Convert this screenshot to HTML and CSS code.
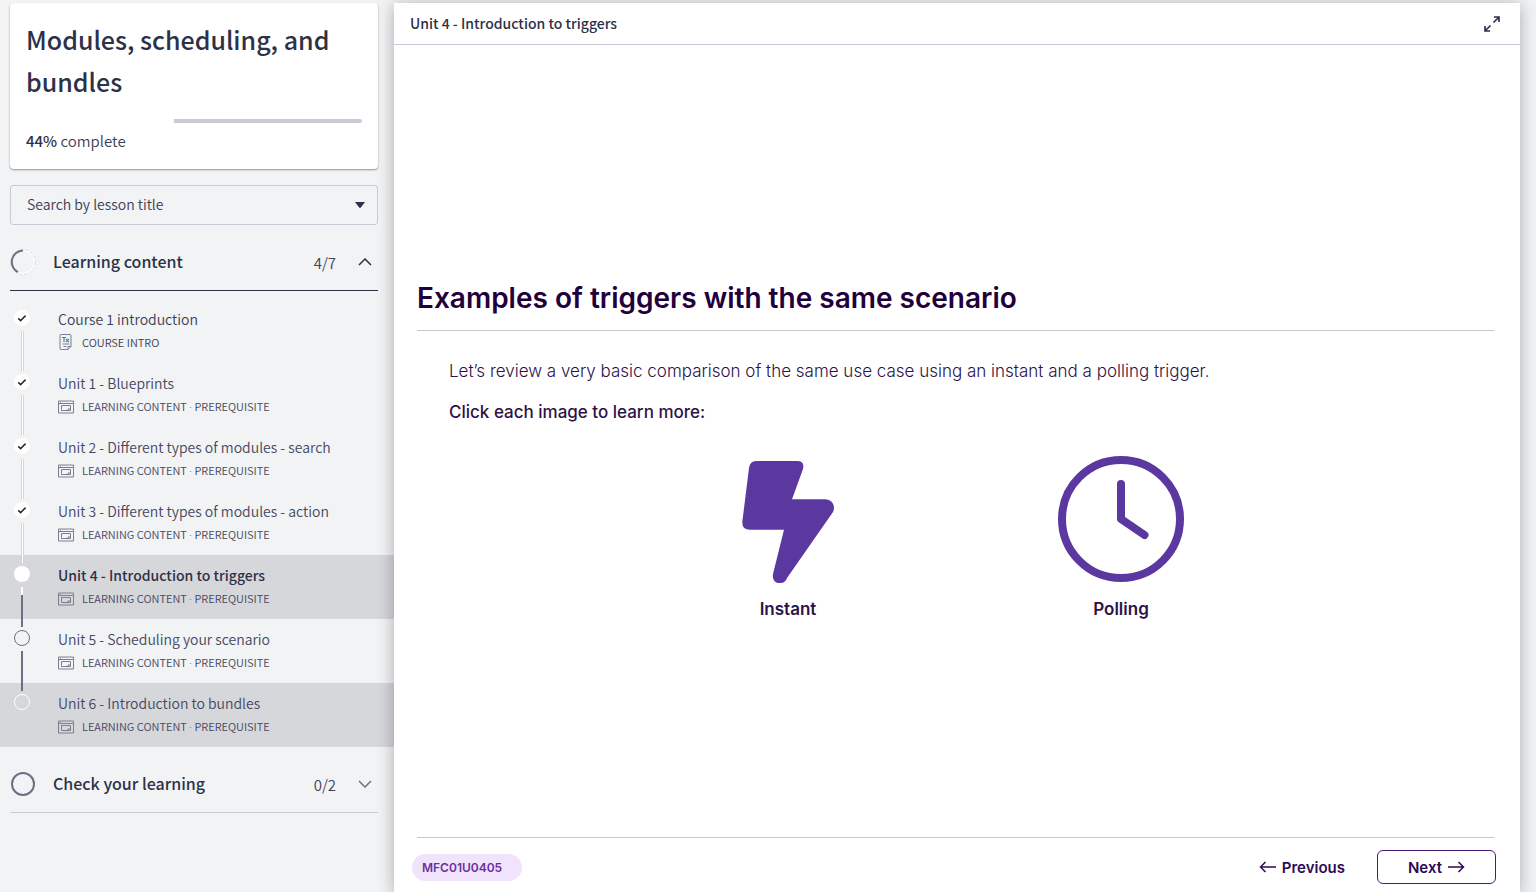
FILE: index.html
```html
<!DOCTYPE html>
<html lang="en">
<head>
<meta charset="utf-8">
<meta name="viewport" content="width=device-width, initial-scale=1">
<title>Modules, scheduling, and bundles</title>
<link rel="stylesheet" href="styles.css">
</head>
<body>
<svg class="sprite" aria-hidden="true">
  <symbol id="check" viewBox="0 0 16 16"><path d="M4.2 8.4l2.4 2.2 5-5" fill="none" stroke="currentColor" stroke-width="1.5"/></symbol>
  <symbol id="lesson" viewBox="0 0 16 14"><path d="M.5 1h15v12H.5zM.5 3.500h15M3.500 5.500h9v5h-9zM12.500 9H10v1.500M2 2.300h1" fill="none" stroke="currentColor"/></symbol>
  <symbol id="text-page" viewBox="0 0 16 16"><path d="M3.500.500h8q1 0 1 1V12.500l-3 3h-7q-1 0-1-1v-13q0-1 1-1zM12.500 12.500h-3v3M4 10h7M5 12.500h3" transform="translate(.5 0)" fill="none" stroke="currentColor"/><path d="M4 3.500h4M6 3.500V8M8 5l3 3M11 5L8 8" fill="none" stroke="#4f7fa8" stroke-width="1.200"/></symbol>
</svg>
<div class="shell">
  <aside class="sidebar">
    <section class="course-card">
      <h1 class="course-title">Modules, scheduling, and bundles</h1>
      <div class="progress" role="progressbar" aria-valuenow="44" aria-valuemin="0" aria-valuemax="100" aria-label="Course progress"><div class="progress-done" style="width:44%"></div><div class="progress-rest"></div></div>
      <p class="progress-text"><strong>44%</strong> complete</p>
    </section>
    <div class="search">
      <select class="search-select" aria-label="Search by lesson title"><option>Search by lesson title</option></select>
      <svg class="search-arrow" viewBox="0 0 10 6" aria-hidden="true"><path d="M0 0h10L5.800 5.500q-.8.8-1.600 0z" fill="#2d3148"/></svg>
    </div>
    <nav aria-label="Course outline">
      <button class="section-head open" aria-expanded="true">
        <svg class="ring" viewBox="0 0 26 26" aria-hidden="true"><circle cx="13" cy="13" r="11.500" fill="none" stroke="#fff" stroke-width="1.500"/><circle cx="13" cy="13" r="12.300" fill="none" stroke="#c9cad3" stroke-width=".6" stroke-dasharray="3 2"/><path d="M8 23.200A11.500 11.500 0 0 1 13 1.500" fill="none" stroke="#6d6f82" stroke-width="2"/></svg>
        <span class="section-name">Learning content</span><span class="section-count">4/7</span>
        <svg class="chevron" viewBox="0 0 14 8" aria-hidden="true"><path d="M1 7l6-6 6 6" fill="none" stroke="currentColor" stroke-width="1.500"/></svg>
      </button>
      <ol class="lessons">
        <li><a class="lesson intro" href="#l1"><span class="track"><i class="seg none"></i><svg class="dot done" aria-hidden="true"><use href="#check"/></svg><i class="seg rest"></i></span><span class="lesson-text"><span class="lesson-name">Course 1 introduction</span><span class="meta"><svg class="meta-icon" aria-hidden="true"><use href="#text-page"/></svg><span>COURSE INTRO</span></span></span></a></li>
        <li><a class="lesson" href="#l2"><span class="track"><i class="seg"></i><svg class="dot done" aria-hidden="true"><use href="#check"/></svg><i class="seg rest"></i></span><span class="lesson-text"><span class="lesson-name">Unit 1 - Blueprints</span><span class="meta"><svg class="meta-icon" aria-hidden="true"><use href="#lesson"/></svg><span>LEARNING CONTENT <span class="sep">·</span> PREREQUISITE</span></span></span></a></li>
        <li><a class="lesson" href="#l3"><span class="track"><i class="seg"></i><svg class="dot done" aria-hidden="true"><use href="#check"/></svg><i class="seg rest"></i></span><span class="lesson-text"><span class="lesson-name">Unit 2 - Different types of modules - search</span><span class="meta"><svg class="meta-icon" aria-hidden="true"><use href="#lesson"/></svg><span>LEARNING CONTENT <span class="sep">·</span> PREREQUISITE</span></span></span></a></li>
        <li><a class="lesson" href="#l4"><span class="track"><i class="seg"></i><svg class="dot done" aria-hidden="true"><use href="#check"/></svg><i class="seg rest"></i></span><span class="lesson-text"><span class="lesson-name">Unit 3 - Different types of modules - action</span><span class="meta"><svg class="meta-icon" aria-hidden="true"><use href="#lesson"/></svg><span>LEARNING CONTENT <span class="sep">·</span> PREREQUISITE</span></span></span></a></li>
        <li><a class="lesson shaded current" href="#l5" aria-current="page"><span class="track"><i class="seg"></i><span class="dot done"></span><i class="seg rest half"></i></span><span class="lesson-text"><span class="lesson-name">Unit 4 - Introduction to triggers</span><span class="meta"><svg class="meta-icon" aria-hidden="true"><use href="#lesson"/></svg><span>LEARNING CONTENT <span class="sep">·</span> PREREQUISITE</span></span></span></a></li>
        <li><a class="lesson" href="#l6"><span class="track"><i class="seg dark"></i><span class="dot todo"></span><i class="seg rest dark"></i></span><span class="lesson-text"><span class="lesson-name">Unit 5 - Scheduling your scenario</span><span class="meta"><svg class="meta-icon" aria-hidden="true"><use href="#lesson"/></svg><span>LEARNING CONTENT <span class="sep">·</span> PREREQUISITE</span></span></span></a></li>
        <li><a class="lesson shaded" href="#l7"><span class="track"><i class="seg dark"></i><span class="dot hover"></span></span><span class="lesson-text"><span class="lesson-name">Unit 6 - Introduction to bundles</span><span class="meta"><svg class="meta-icon" aria-hidden="true"><use href="#lesson"/></svg><span>LEARNING CONTENT <span class="sep">·</span> PREREQUISITE</span></span></span></a></li>
      </ol>
      <button class="section-head" aria-expanded="false">
        <svg class="ring" viewBox="0 0 26 26" aria-hidden="true"><circle cx="13" cy="13" r="11" fill="none" stroke="#6d6f82" stroke-width="2"/></svg>
        <span class="section-name">Check your learning</span><span class="section-count">0/2</span>
        <svg class="chevron" viewBox="0 0 14 8" aria-hidden="true"><path d="M1 1l6 6 6-6" fill="none" stroke="#6d6f82" stroke-width="1.500"/></svg>
      </button>
    </nav>
  </aside>
  <main class="viewer">
    <header class="viewer-head">
      <h2 class="viewer-title">Unit 4 - Introduction to triggers</h2>
      <button class="expand" aria-label="Full screen"><svg viewBox="0 0 18 18" width="18" height="18" aria-hidden="true"><path d="M10.500 7.500L15.500 2.500M11 2h5v5M7.500 10.500l-5 5M2 11v5h5" fill="none" stroke="#2d3148" stroke-width="1.700"/></svg></button>
    </header>
    <div class="slide">
      <article class="slide-body">
        <h3 class="slide-title">Examples of triggers with the same scenario</h3>
        <div class="slide-copy">
          <p class="copy-line">Let’s review a very basic comparison of the same use case using an instant and a polling trigger.</p>
          <p class="copy-line prompt">Click each image to learn more:</p>
        </div>
        <div class="choices">
          <button class="choice"><svg viewBox="0 0 128 128" width="128" height="128" aria-hidden="true"><path d="M32 5H73Q81 5 79 13L68 43.300H101C108 43.300 112 50 109 56L63 122C61 127 58 127 55 127C51 127 48 123 49 118L60 73.700H26Q18 73.700 18.300 66L25 12Q26 5 32 5Z" fill="#5b389f"/></svg><span>Instant</span></button>
          <button class="choice"><svg viewBox="0 0 128 128" width="128" height="128" aria-hidden="true"><circle cx="64" cy="63" r="59" fill="none" stroke="#5b389f" stroke-width="8"/><path d="M64 28V63L87.500 79" fill="none" stroke="#5b389f" stroke-width="8" stroke-linecap="round" stroke-linejoin="round"/></svg><span>Polling</span></button>
        </div>
      </article>
      <footer class="slide-foot">
        <span class="code">MFC01U0405</span>
        <div class="pager">
          <button class="page-btn"><svg class="arrow" viewBox="0 0 18 12" aria-hidden="true"><path d="M17 6H1.500M6.500 1L1.500 6l5 5" fill="none" stroke="currentColor" stroke-width="1.500"/></svg>Previous</button>
          <button class="page-btn next">Next<svg class="arrow" viewBox="0 0 18 12" aria-hidden="true"><path d="M1 6h15.500M11.500 1l5 5-5 5" fill="none" stroke="currentColor" stroke-width="1.500"/></svg></button>
        </div>
      </footer>
    </div>
  </main>
</div>
</body>
</html>
```
FILE: styles.css
```css
* { box-sizing: border-box; }
body { margin: 0; background: #f1f3f5; color: #2d3148; font-family: "Noto Sans CJK SC", "Noto Sans", sans-serif; }
h1, h2, h3, p, ol { margin: 0; padding: 0; }
ol { list-style: none; }
button { margin: 0; padding: 0; border: 0; background: none; color: inherit; font: inherit; cursor: pointer; }
.sprite { display: none; }
.shell { display: grid; grid-template-columns: 394px 1fr; min-height: 100vh; padding: 3px 16px 0 0; }

.course-card { margin: 0 16px 16px 10px; padding: 15px 16px 18px; background: #fff; border-radius: 4px; box-shadow: 0 1px 2px rgba(0, 0, 0, .4); }
.course-title { font-size: 25px; line-height: 42px; font-weight: 500; }
.progress { display: flex; height: 4px; margin: 17px 0 8px; }
.progress-rest { flex: 1; background: #c9cad6; border-radius: 0 2px 2px 0; }
.progress-text { font-size: 15px; line-height: 20px; font-weight: 350; color: #3b3e53; }
.progress-text strong { font-weight: 500; color: #2d3148; }

.search { display: flex; position: relative; margin: 0 16px 9px 10px; }
.search-select { appearance: none; width: 100%; height: 40px; padding: 0 32px 2px 16px; border: 1px solid #c9cad6; border-radius: 3px; background: transparent; color: #3b3e53; font-family: inherit; font-size: 14px; font-weight: 350; }
.search-arrow { position: absolute; right: 13px; top: 17px; width: 10px; height: 6px; pointer-events: none; }

.section-head { display: flex; align-items: center; width: calc(100% - 26px); height: 57px; margin: 9px 16px 0 10px; border-bottom: 1px solid #c9cad6; text-align: left; }
.section-head.open { border-color: #2d3148; }
.ring { width: 26px; height: 26px; margin-right: 17px; }
.section-name { flex: 1; padding-bottom: 2px; font-size: 16px; font-weight: 500; }
.section-count { margin-right: 22px; font-size: 15px; font-weight: 350; color: #3f4258; }
.chevron { width: 14px; height: 8px; margin-right: 6px; }

.lessons { padding-top: 8px; }
.lesson { display: flex; height: 64px; padding-left: 14px; color: #45485f; font-weight: 350; text-decoration: none; }
.lesson.intro { color: #3b3e53; }
.lesson.shaded { background: #d6d7db; }
.lesson.current .lesson-name { font-weight: 500; color: #2d3148; }
.track { display: flex; flex-direction: column; align-items: center; width: 16px; margin-right: 28px; }
.seg { width: 3px; height: 8px; background: #fff; border: solid #d3d5d9; border-width: 0 1px; }
.seg.none { visibility: hidden; }
.seg.rest { flex: 1; height: auto; }
.seg.dark { width: 2px; border: 0; background: #6d6f82; }
.seg.half { width: 2px; border: 0; background: linear-gradient(#fff 8px, #6d6f82 8px); }
.dot { flex: none; width: 16px; height: 16px; margin: 3px 0 5px; border-radius: 50%; color: #2b2b2b; }
.dot.done { background: #fff; }
.dot.todo { border: 1px solid #6d6f82; }
.dot.hover { border: 1px solid #fff; }
.lesson-text { display: flex; flex-direction: column; padding-top: 9px; }
.lesson-name { font-size: 14px; line-height: 22px; }
.meta { display: flex; align-items: center; gap: 8px; font-size: 11px; line-height: 24px; }
.sep { font-family: Roboto, sans-serif; }
.meta-icon { width: 16px; height: 16px; color: #7c7e93; }

.viewer { display: flex; flex-direction: column; background: #fff; box-shadow: 0 2px 16px rgba(0, 0, 0, .3); }
.viewer-head { display: flex; align-items: center; justify-content: space-between; height: 42px; padding: 0 19px 0 16px; border-bottom: 1px solid #c9cad6; }
.viewer-title { padding-bottom: 2px; font-size: 14px; font-weight: 500; }
.expand { display: flex; }
.slide { display: flex; flex: 1; flex-direction: column; padding: 0 26px 0 23px; color: #2d1248; font-family: Inter, "Liberation Sans", sans-serif; }
.slide-body { display: flex; flex: 1; flex-direction: column; justify-content: center; padding-top: 18px; }
.slide-title { padding-bottom: 14px; border-bottom: 1px solid #c9c8cc; color: #21003b; font-size: 28px; line-height: 36px; font-weight: 600; }
.slide-copy { padding: 20px 32px 0; }
.copy-line { font-size: 17px; line-height: 41px; font-weight: 300; }
.copy-line.prompt { font-weight: 500; }
.choices { display: flex; justify-content: center; gap: 205px; margin-top: 23px; padding-right: 2px; }
.choice { display: flex; flex-direction: column; align-items: center; gap: 13px; font-size: 17px; line-height: 24px; font-weight: 600; }
.slide-foot { display: flex; align-items: center; justify-content: space-between; padding: 12px 0 8px; border-top: 1px solid #c9c8cc; }
.code { margin-left: -5px; padding: 0 20px 0 10px; border-radius: 14px; background: #f0e3fb; color: #6a2fa0; font-size: 12px; line-height: 27px; font-weight: 600; }
.pager { display: flex; gap: 32px; margin-right: -2px; color: #2d0a56; }
.page-btn { display: flex; align-items: center; justify-content: center; gap: 5px; height: 34px; font-size: 15px; font-weight: 600; }
.page-btn.next { padding: 0 30px; border: 1px solid #4a1a7a; border-radius: 6px; }
.arrow { width: 18px; height: 12px; }
```
